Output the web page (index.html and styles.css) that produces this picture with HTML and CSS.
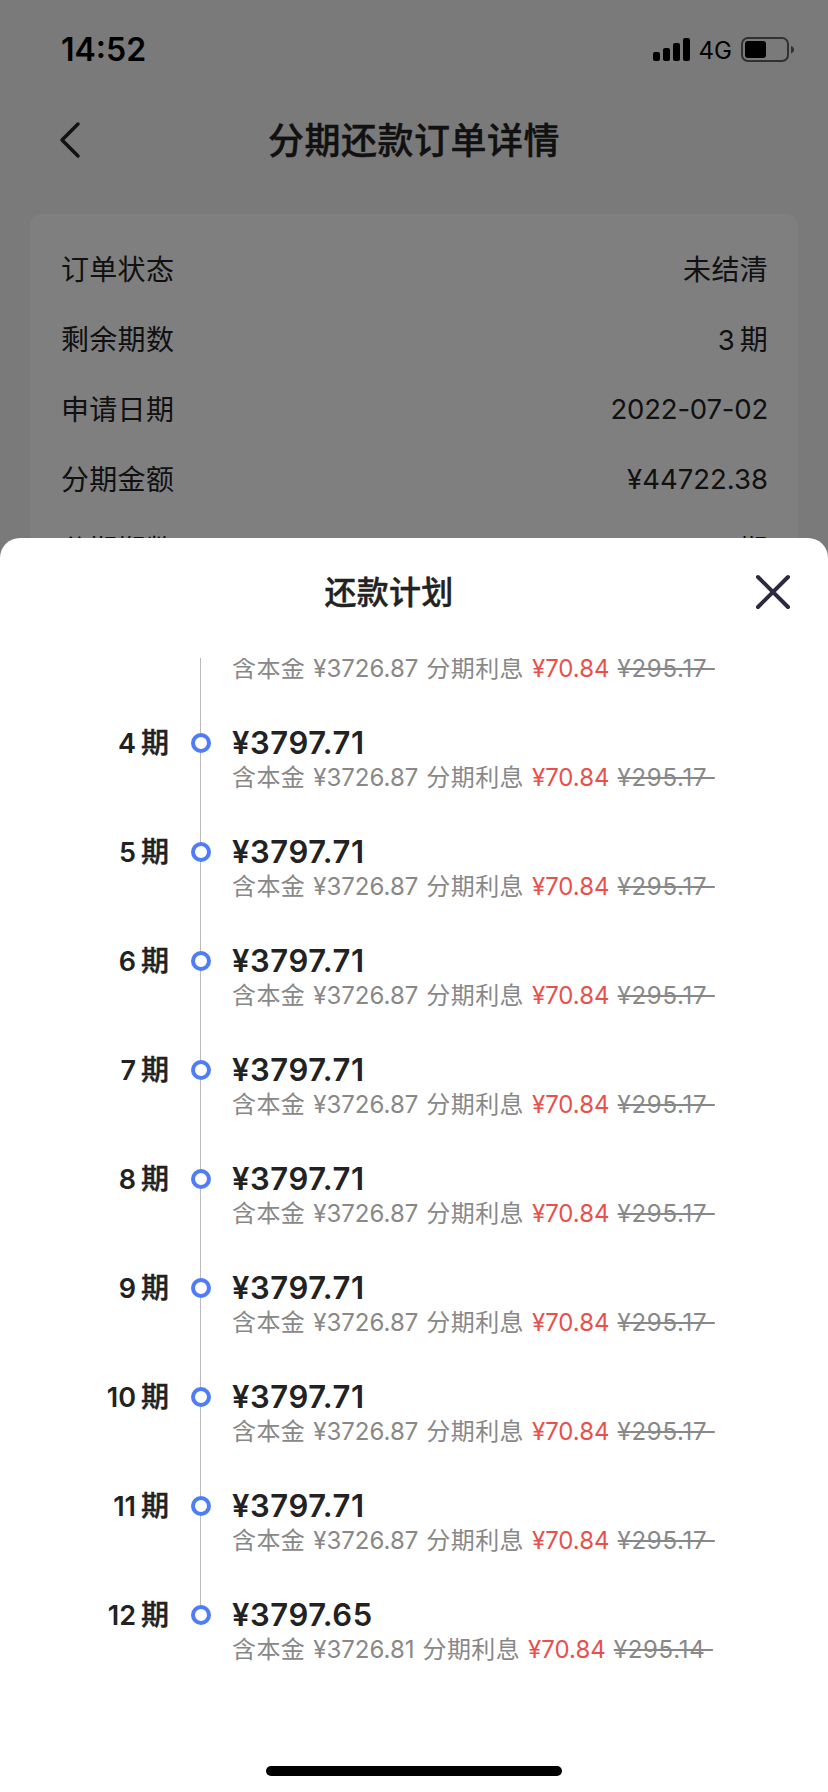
FILE: index.html
```html
<!DOCTYPE html>
<html lang="zh-CN">
<head>
  <meta charset="UTF-8">
  <meta name="viewport" content="width=device-width, initial-scale=1.0">
  <title>分期还款订单详情</title>
  <link rel="stylesheet" href="styles.css">
</head>
<body>
  <div class="page">
    <div class="status-bar">
      <span class="time">14:52</span>
      <div class="status-icons">
        <svg class="signal" width="38" height="24" viewBox="0 0 38 24">
          <rect x="0" y="14" width="7" height="9" rx="2"/>
          <rect x="10" y="10" width="7" height="13" rx="2"/>
          <rect x="20" y="5" width="7" height="18" rx="2"/>
          <rect x="30" y="0" width="7" height="23" rx="2"/>
        </svg>
        <span class="network">4G</span>
        <svg class="battery" width="54" height="26" viewBox="0 0 54 26">
          <rect x="1" y="1" width="46" height="23" rx="6" fill="none" stroke="#000" stroke-opacity=".6" stroke-width="2"/>
          <rect x="4" y="4" width="21" height="17" rx="3"/>
          <path d="M50 9c2 .6 3 2 3 3.700s-1 3-3 3.700z" fill-opacity=".6"/>
        </svg>
      </div>
    </div>
    <div class="nav">
      <svg class="back" width="24" height="40" viewBox="0 0 24 40">
        <path d="M20 4L4 20l16 16" fill="none" stroke="#222" stroke-width="3.500" stroke-linecap="round" stroke-linejoin="round"/>
      </svg>
      <h1>分期还款订单详情</h1>
    </div>
    <div class="card">
      <div class="row"><span>订单状态</span><span>未结清</span></div>
      <div class="row"><span>剩余期数</span><span><b class="num count">3</b>期</span></div>
      <div class="row"><span>申请日期</span><b class="num date">2022-07-02</b></div>
      <div class="row"><span>分期金额</span><b class="num">¥44722.38</b></div>
      <div class="row"><span>分期期数</span><span>期</span></div>
    </div>
  </div>

  <div class="mask">
    <div class="sheet">
      <div class="sheet-head">
        <h2>还款计划</h2>
        <svg class="close" width="36" height="36" viewBox="0 0 36 36">
          <path d="M3 3l30 30M33 3L3 33" fill="none" stroke="#2b2a40" stroke-width="4" stroke-linecap="round"/>
        </svg>
      </div>
      <div class="plan">
        <ul class="plan-list"></ul>
      </div>
      <div class="home-bar"></div>
    </div>
  </div>

  <script>
    const plan = [];
    for (let i = 3; i <= 11; i++) {
      plan.push({ no: i, total: '3797.71', base: '3726.87', fee: '70.84', old: '295.17' });
    }
    plan.push({ no: 12, total: '3797.65', base: '3726.81', fee: '70.84', old: '295.14' });

    document.querySelector('.plan-list').innerHTML = plan.map(p => `
      <li class="item">
        <div class="term"><span class="term-no">${p.no}</span>期</div>
        <div class="dot"></div>
        <div class="info">
          <div class="total">¥${p.total}</div>
          <div class="detail"><span>含本金</span><span class="n">¥${p.base}</span><span>分期利息</span><span class="n fee">¥${p.fee}</span><del class="n old">¥${p.old}&nbsp;</del></div>
        </div>
      </li>`).join('');
  </script>
</body>
</html>
```
FILE: styles.css
```css
* {
  box-sizing: border-box;
}
body {
  margin: 0;
  height: 1792px;
  overflow: hidden;
  font-family: Inter, "Noto Sans CJK SC", sans-serif;
  color: #222;
  background: #f5f5f5;
}
h1, h2, ul {
  margin: 0;
  padding: 0;
}
.page {
  height: 1792px;
  overflow: hidden;
}
.status-bar {
  display: flex;
  justify-content: space-between;
  height: 88px;
  padding: 30px 33px 0 61px;
  color: #000;
}
.time {
  font-size: 32px;
  font-weight: 600;
  line-height: 40px;
}
.status-icons {
  display: flex;
  align-items: center;
  height: 40px;
}
.network {
  margin: 1px 9px 0 8px;
  font-size: 24px;
}
.nav {
  display: flex;
  align-items: center;
  justify-content: center;
  position: relative;
  height: 104px;
  padding-bottom: 5px;
}
.back {
  position: absolute;
  left: 58px;
  top: 32px;
}
h1 {
  font-size: 36px;
  font-weight: 500;
  letter-spacing: 0.5px;
  -webkit-text-stroke: 0.4px #222;
}
.card {
  margin: 22px 30px 0;
  padding: 19px 30px 0 31px;
  height: 1000px;
  border-radius: 12px;
  background: #fff;
}
.row {
  display: flex;
  align-items: center;
  justify-content: space-between;
  height: 70px;
  font-size: 28px;
  letter-spacing: 0.3px;
}
.num {
  padding-top: 1px;
  font-size: 27.5px;
  font-weight: 400;
  letter-spacing: 0;
}
.date {
  letter-spacing: -0.2px;
}
.count {
  margin-right: 5px;
}
.mask {
  position: absolute;
  top: 0;
  left: 0;
  width: 828px;
  height: 1792px;
  background: rgba(0, 0, 0, 0.5);
  display: flex;
  flex-direction: column;
  justify-content: flex-end;
}
.sheet {
  display: flex;
  flex-direction: column;
  height: 1254px;
  border-radius: 20px 20px 0 0;
  background: #fff;
}
.sheet-head {
  position: relative;
  height: 120px;
  padding-right: 50px;
  text-align: center;
}
h2 {
  font-size: 32px;
  font-weight: 500;
  line-height: 109px;
  letter-spacing: 0.3px;
  -webkit-text-stroke: 0.4px #222;
}
.close {
  position: absolute;
  right: 37px;
  top: 36px;
}
.plan {
  flex: 1;
  overflow: hidden;
}
.plan-list {
  margin-top: -44px;
  list-style: none;
}
.item {
  display: flex;
  position: relative;
  height: 109px;
}
.item:not(:last-child)::after {
  content: "";
  position: absolute;
  left: 200px;
  top: 30px;
  width: 1px;
  height: 89px;
  background: #bbb;
}
.term {
  width: 169px;
  text-align: right;
  font-size: 28px;
  font-weight: 500;
  line-height: 40px;
  -webkit-text-stroke: 0.4px #222;
}
.term-no {
  margin-right: 5px;
  font-size: 27px;
  font-weight: 600;
  -webkit-text-stroke: 0;
}
.dot {
  width: 20px;
  height: 20px;
  margin: 10px 21px 0 22px;
  border: 4px solid #4f7df7;
  border-radius: 50%;
}
.total {
  font-size: 31px;
  font-weight: 600;
  line-height: 40px;
  letter-spacing: 0.55px;
}
.detail {
  display: flex;
  gap: 8px;
  font-size: 24px;
  line-height: 30px;
  letter-spacing: 0.4px;
  color: #888;
}
.n {
  letter-spacing: 0;
}
.fee {
  color: #e8504c;
}
.old {
  letter-spacing: 0.7px;
}
.home-bar {
  width: 296px;
  height: 10px;
  margin: 0 auto 16px;
  border-radius: 5px;
  background: #000;
}
```
